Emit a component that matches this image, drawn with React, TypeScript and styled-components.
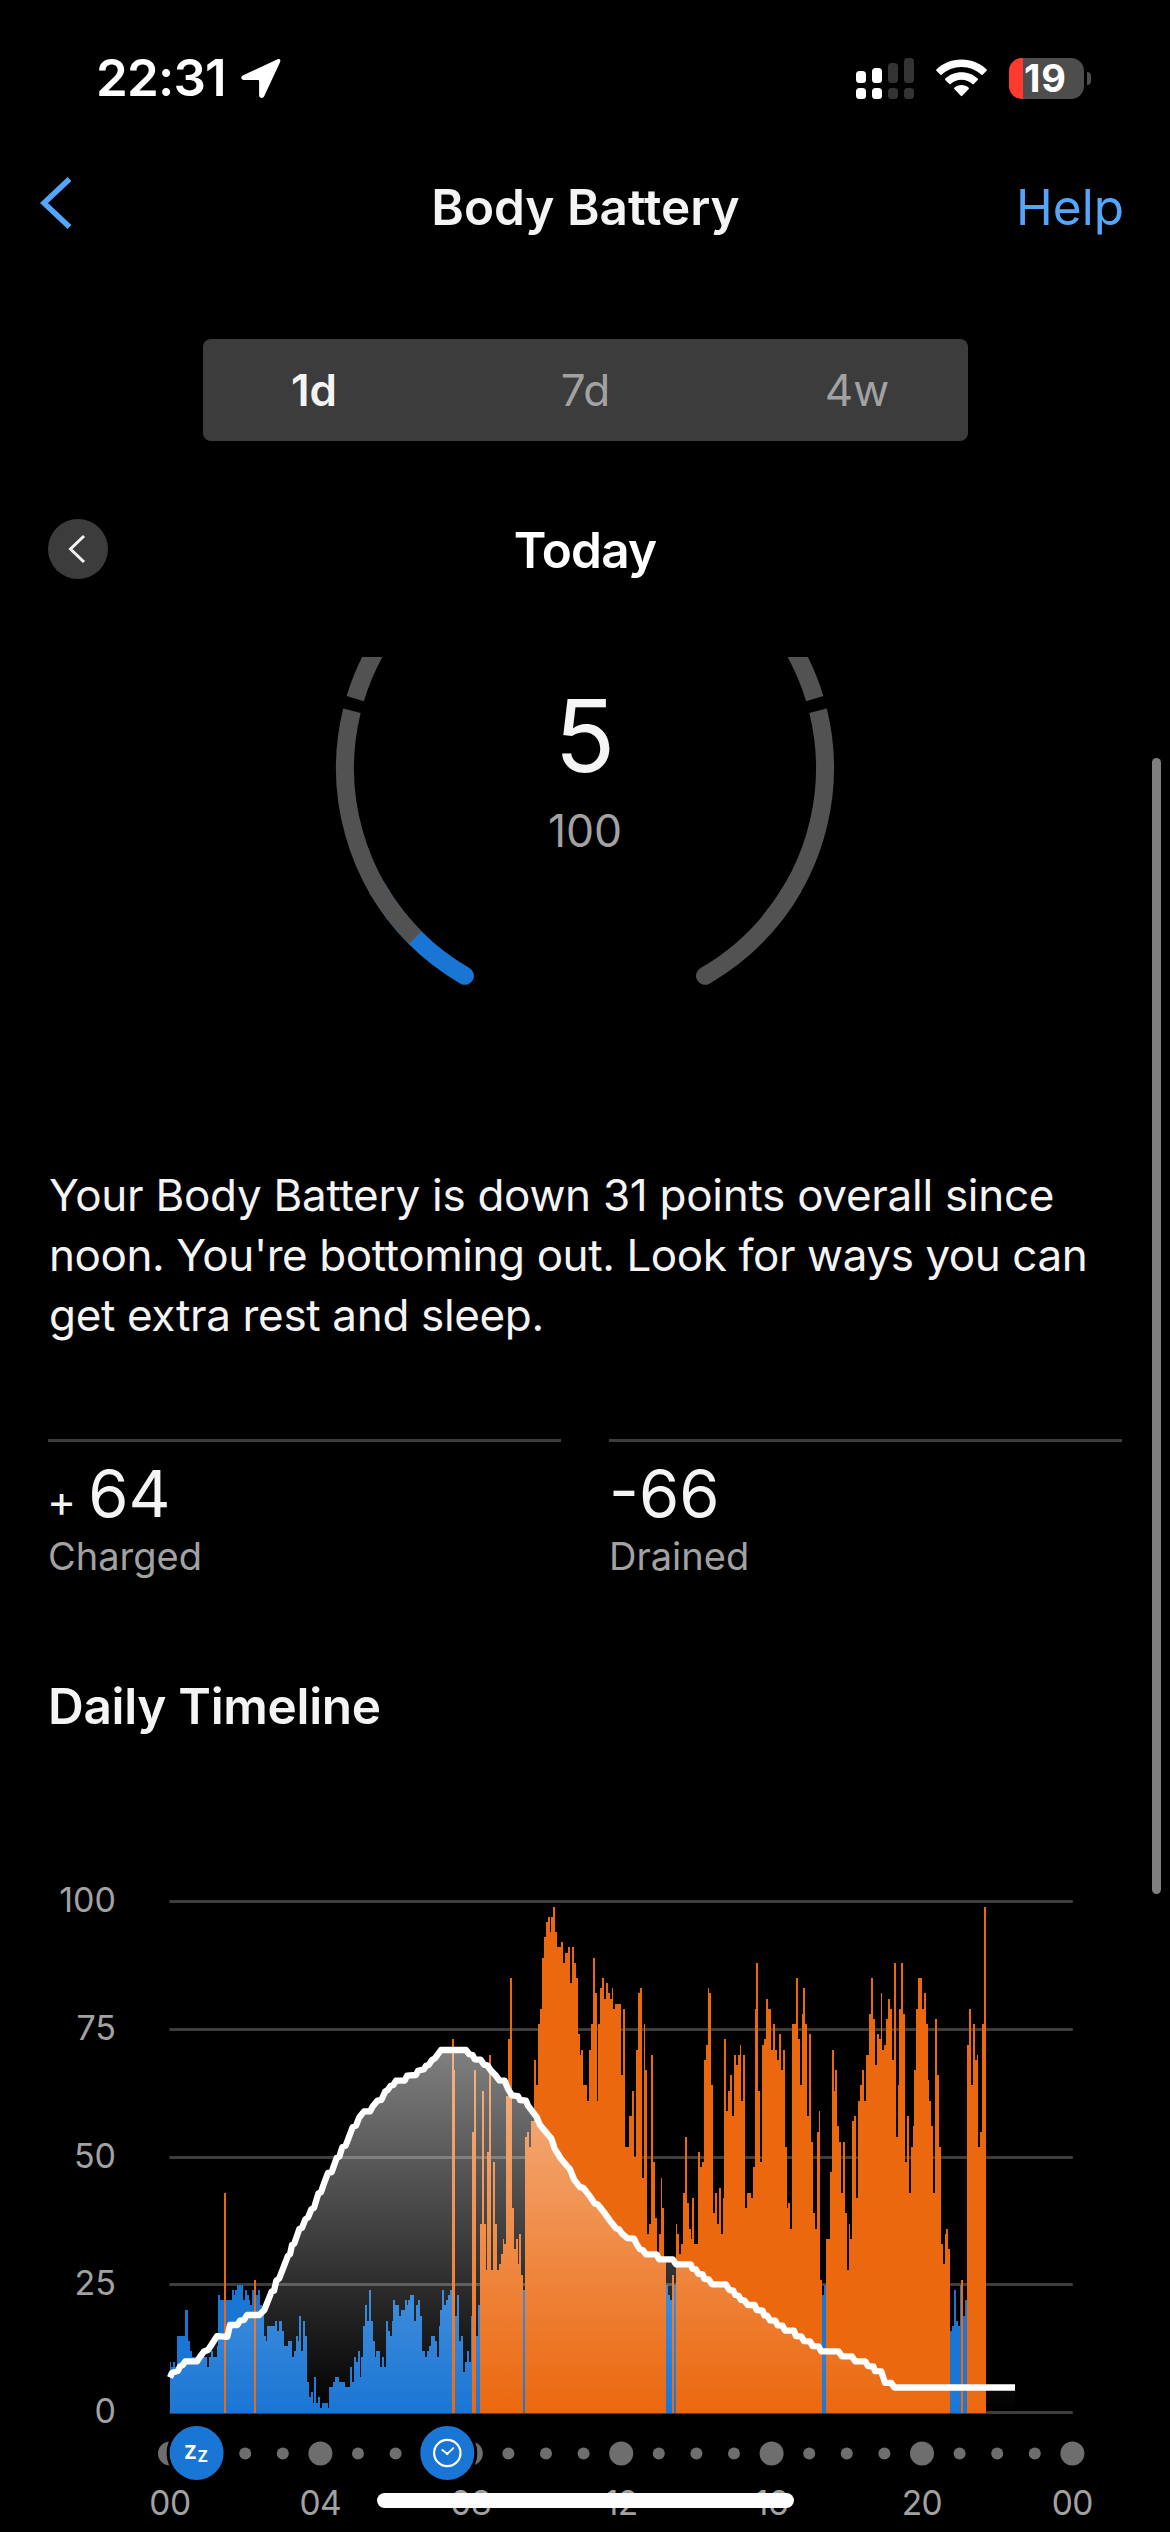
import React from 'react';
import styled, { createGlobalStyle } from 'styled-components';

const color = {
  bg: '#000000',
  text: '#f4f4f4',
  muted: '#a2a2a2',
  panel: '#3c3c3c',
  grid: '#3d3d3d',
  gauge: '#525252',
  dot: '#6e6e6e',
  link: '#54a6fd',
  blue: '#1a76d4',
  orange: '#eb680e',
};

const GlobalStyle = createGlobalStyle`
  html, body { margin: 0; background: ${color.bg}; }
  * { box-sizing: border-box; }
`;

const Screen = styled.main`
  position: relative;
  display: flex;
  flex-direction: column;
  width: 1170px;
  height: 2532px;
  overflow: hidden;
  background: ${color.bg};
  color: ${color.text};
  font-family: Inter, 'Liberation Sans', sans-serif;
`;

const StatusBar = styled.header`
  display: flex;
  flex: none;
  align-items: center;
  justify-content: space-between;
  height: 156px;
  padding: 0 79px 0 96px;
  color: #fff;
`;

const StatusGroup = styled.div<{ $gap: number }>`
  display: flex;
  align-items: center;
  gap: ${(p) => p.$gap}px;
`;

const Clock = styled.span`
  font-size: 51px;
  font-weight: 600;
  line-height: 60px;
  letter-spacing: -0.8px;
`;

const Battery = styled.div`
  display: flex;
  align-items: center;
  gap: 3px;
`;

const BatteryBody = styled.div`
  width: 75px;
  height: 41px;
  border-radius: 13px;
  background: linear-gradient(90deg, #ff3b30 14px, #4d4d4d 14px);
  color: #fff;
  font-size: 38px;
  font-weight: 700;
  line-height: 41px;
  letter-spacing: 0.8px;
  padding-left: 15px;
`;

const BatteryTip = styled.div`
  width: 4px;
  height: 13px;
  border-radius: 0 4px 4px 0;
  background: #4d4d4d;
`;

const NavBar = styled.nav`
  display: grid;
  grid-template-columns: 1fr auto 1fr;
  flex: none;
  align-items: center;
  height: 102px;
  padding: 0 46px 0 38px;
`;

const BackButton = styled.button`
  display: flex;
  padding: 0 0 8px;
  border: 0;
  background: none;
`;

const NavTitle = styled.h1`
  margin: 0;
  padding-left: 9px;
  font-size: 49.5px;
  font-weight: 600;
  line-height: 60px;
`;

const HelpLink = styled.a`
  justify-self: end;
  color: ${color.link};
  font-size: 49.5px;
  line-height: 60px;
`;

const Segments = styled.div`
  display: flex;
  flex: none;
  align-items: center;
  justify-content: space-between;
  width: 765px;
  height: 102px;
  margin: 81px 0 0 203px;
  padding: 0 61px;
  border-radius: 8px;
  background: ${color.panel};
`;

const Segment = styled.span<{ $active?: boolean }>`
  width: 100px;
  color: ${(p) => (p.$active ? color.text : color.muted)};
  font-size: 44px;
  font-weight: ${(p) => (p.$active ? 600 : 400)};
  line-height: 54px;
  text-align: center;
`;

const DayRow = styled.div`
  display: grid;
  grid-template-columns: 60px 1fr 60px;
  flex: none;
  align-items: center;
  height: 60px;
  margin-top: 78px;
  padding: 0 48px;
`;

const RoundButton = styled.button`
  display: flex;
  align-items: center;
  justify-content: center;
  width: 60px;
  height: 60px;
  padding: 0 3px 0 0;
  border: 0;
  border-radius: 50%;
  background: ${color.panel};
`;

const DayTitle = styled.h2`
  margin: 0;
  padding-top: 2px;
  color: #fff;
  font-size: 49.5px;
  font-weight: 600;
  line-height: 58px;
  letter-spacing: -0.8px;
  text-align: center;
`;

const GaugeArea = styled.section`
  display: grid;
  flex: none;
  justify-items: center;
  height: 343px;
  margin-top: 78px;

  > * { grid-area: 1 / 1; }
`;

const Readout = styled.div`
  display: flex;
  flex-direction: column;
  align-items: center;
  padding-top: 29px;
`;

const Score = styled.span`
  font-size: 100px;
  line-height: 100px;
`;

const ScoreMax = styled.span`
  margin-top: 23px;
  color: ${color.muted};
  font-size: 44.5px;
  line-height: 44px;
`;

const Summary = styled.p`
  flex: none;
  margin: 165px 0 0;
  padding-left: 49px;
  font-size: 44px;
  line-height: 60px;
`;

const SummaryLine = styled.span<{ $tracking: number }>`
  display: block;
  letter-spacing: ${(p) => p.$tracking}px;
  white-space: nowrap;
`;

const Stats = styled.section`
  display: grid;
  grid-template-columns: 1fr 1fr;
  flex: none;
  gap: 48px;
  margin-top: 94px;
  padding: 0 48px;
`;

const Stat = styled.div`
  display: flex;
  flex-direction: column;
  padding-top: 17px;
  border-top: 3px solid ${color.grid};
`;

const StatValue = styled.div`
  display: flex;
  align-items: baseline;
  gap: 12px;
  height: 70px;
  font-size: 65px;
  line-height: 70px;
`;

const StatSign = styled.span`
  margin-left: -1px;
  font-size: 44px;
  line-height: 44px;
`;

const StatLabel = styled.span`
  margin-top: 3px;
  color: ${color.muted};
  font-size: 38px;
  line-height: 48px;
`;

const SectionTitle = styled.h2`
  flex: none;
  margin: 96px 0 0 48px;
  font-size: 49.5px;
  font-weight: 600;
  line-height: 60px;
  letter-spacing: -0.3px;
`;

const ChartRow = styled.section`
  display: grid;
  grid-template-columns: 116px 960px;
  flex: none;
  column-gap: 24px;
  height: 590px;
  margin-top: 100px;
`;

const LevelAxis = styled.div`
  display: flex;
  flex-direction: column;
  align-items: flex-end;
  color: ${color.muted};
  font-size: 34px;
`;

const LevelLabel = styled.span`
  flex: none;
  height: 127.8px;
  line-height: 127.8px;
`;

const EventTrack = styled.div`
  flex: none;
  height: 54px;
  margin-left: 140px;
`;

const HourAxis = styled.div`
  display: flex;
  flex: none;
  margin: 3px 0 0 94.8px;
  color: ${color.muted};
  font-size: 33.5px;
  line-height: 40px;
  letter-spacing: -0.5px;
`;

const HourLabel = styled.span`
  flex: none;
  width: 150.4px;
  text-align: center;
`;

const HomeIndicator = styled.div`
  position: absolute;
  bottom: 24px;
  left: 377px;
  width: 417px;
  height: 15px;
  border-radius: 8px;
  background: #fdfdfd;
`;

const ScrollThumb = styled.div`
  position: absolute;
  top: 758px;
  right: 9px;
  width: 9px;
  height: 1136px;
  border-radius: 5px;
  background: #7f7f7f;
`;

const Drawing = styled.svg`
  display: block;
  flex: none;
`;

/* ---- Stress series: "x,y" marks where a new level starts; b = rest, o = stress ---- */

const SEGMENTS: { offset: number; marks: string }[] = [
  {
    offset: 0,
    marks: `b60,1350 63,1364 69,1350 75,1364 81,1277 105,1204 114,1291 120,1319 126,1335 171,1364 177,1335 183,1319 189,1335
      201,1305 204,1162 210,1176 o222,876 b228,1176 246,1148 252,1162 255,1148 261,1134 279,1176 285,1148 291,1162 297,1176
      300,1190 306,1148 o312,1120 b318,1162 324,1148 330,1190 336,1204 342,1277 348,1291 351,1249 375,1235 381,1262 387,1235
      396,1262 402,1305 414,1291 426,1335 432,1319 438,1277 444,1291 447,1221 453,1319 459,1235 465,1277 471,1406 477,1448
      483,1434 489,1463 492,1392 498,1463 504,1448 510,1477 516,1463 534,1477 537,1420 549,1406 555,1392 567,1406 585,1420
      600,1364 606,1406 612,1335 618,1349 624,1319 630,1391 633,1335 639,1249 645,1190 651,1235 657,1148 663,1235 669,1291
      675,1335 678,1319 690,1364 696,1335 702,1364 708,1235 714,1262 720,1277 726,1235 729,1176 735,1190 747,1221 753,1204
      765,1176 771,1190 774,1176 780,1162 792,1235 798,1190 804,1176 810,1221 816,1319 825,1335 831,1319 837,1305 843,1277
      855,1291 861,1335 867,1249 870,1204 876,1148 882,1190 888,1176 894,1162 900,1148 o906,445 912,532 b915,1221 921,1162
      927,1291 933,1277 939,1378 945,1349 951,1319 957,1349 963,1221 o966,706 972,532 b978,1277 984,1190`,
  },
  {
    offset: 870,
    marks: `o120,963 126,591 132,963 138,1091 141,762 147,490 153,1091 159,790 165,963 171,1091 177,1075 183,1047 189,1005
      192,1019 198,605 204,445 210,274 216,918 222,1033 228,1005 234,1075 237,991 243,1106 b249,1148 o255,720 261,706
      267,748 273,675 282,504 288,574 294,404 300,361 306,218 312,160 318,118 324,104 330,146 333,104 339,76 345,146
      351,188 363,174 369,232 375,204 384,188 390,288 396,188 402,232 408,274 414,431 420,490 423,476 429,574 441,619
      447,476 453,404 459,218 465,316 471,619 474,404 480,302 486,274 492,333 498,288 504,316 510,333 516,302 519,361
      525,347 543,546 549,361 555,748 567,661 576,591 582,776 588,476 594,316 600,302 606,834 612,404 615,532 621,991
      627,963 633,490 639,790 645,946 651,1047 657,991 663,834 666,918 672,1062 b678,1134 684,1162 690,1176 o696,1106
      b702,1134`,
  },
  {
    offset: 1560,
    marks: `o18,963 21,991 27,1047 33,1019 39,876 45,720 51,904 57,977 63,1005 66,890 72,1019 84,762 90,804 96,790 102,504
      108,462 114,302 117,316 123,574 129,932 135,876 141,963 147,862 153,991 159,890 162,445 168,647 174,591 180,546
      186,661 192,490 198,518 204,490 210,462 213,619 219,490 225,918 231,876 243,890 249,804 255,361 258,232 264,591
      270,790 276,462 282,445 288,333 294,361 303,476 309,404 315,476 321,504 327,431 333,532 339,476 345,748 351,918
      354,904 360,977 366,404 378,274 384,445 390,574 396,375 399,302 405,404 411,661 417,431 423,734 429,932 435,977
      441,706 447,647 450,1120 b456,1162 462,1134 o468,1005 480,818 486,476 492,591 495,532 501,689 507,734 513,876
      519,734 525,932 531,1091 537,963 540,1005`,
  },
  {
    offset: 2100,
    marks: `o6,675 12,661 18,890 24,619 30,574 36,532 42,619 48,490 57,375 63,274 69,389 75,518 81,431 87,445 93,316 96,476
      102,462 108,389 114,333 120,361 126,504 132,232 138,720 144,574 147,361 153,232 159,375 165,790 171,661 177,876
      183,748 189,689 192,532 198,361 204,274 216,361 222,316 228,404 234,560 237,619 243,689 249,876 255,389 261,546
      267,748 273,1019 279,1075 285,991 288,977 294,1033 b300,1263 306,1249 312,1148 318,1235 324,1249 330,1134 o333,1120
      b339,1221 345,1176 o351,462 357,361 363,574 369,404 375,504 381,490 384,748 390,706 396,404 402,76`,
  },
];

const SERIES_END = 2508;
const BASE = 577;

/* Body Battery curve, in the same units as the stress series */
const CURVE = `60,1393 66,1380 84,1374 90,1362 98,1358 106,1348 141,1348 150,1335 162,1320 174,1316 184,1302 201,1277 232,1279
  240,1246 262,1246 270,1234 282,1232 291,1218 328,1218 343,1204 365,1152 372,1150 379,1122 388,1115 414,1052 420,1048
  426,1022 433,1018 448,977 456,974 466,950 474,945 484,922 492,918 505,878 513,874 522,850 534,820 545,818 560,778
  568,774 577,748 587,744 608,692 618,688 628,664 642,648 660,648 668,634 682,618 694,616 706,592 713,588 722,576
  730,574 738,562 764,562 771,548 798,546 804,534 822,530 828,520 836,518 846,504 854,500 873,476 948,476 958,488
  968,490 974,502 992,503 1002,517 1012,519 1024,535 1036,546 1048,561 1064,562 1074,585 1086,603 1104,605 1110,616
  1128,618 1134,632 1160,664 1170,686 1204,724 1214,752 1234,782 1260,810 1272,838 1290,860 1300,862 1320,886 1334,906
  1343,908 1360,928 1380,954 1398,975 1407,978 1416,990 1432,1003 1452,1004 1460,1020 1470,1034 1478,1036 1488,1048
  1520,1048 1527,1062 1568,1062 1578,1076 1622,1076 1628,1089 1638,1090 1645,1103 1658,1104 1663,1117 1676,1118
  1686,1132 1728,1132 1738,1148 1750,1150 1756,1162 1766,1164 1773,1176 1784,1178 1793,1190 1814,1190 1820,1204
  1838,1206 1843,1219 1852,1220 1860,1233 1876,1234 1883,1247 1898,1248 1905,1262 1932,1262 1938,1277 1954,1278
  1962,1291 1980,1292 1988,1305 2006,1306 2014,1320 2066,1320 2076,1334 2106,1334 2116,1348 2146,1348 2154,1361
  2170,1362 2175,1375 2194,1376 2205,1408 2224,1408 2233,1421 2595,1421`;

const toX = (u: number) => 10 + u / 3;
const toY = (u: number) => 44 + u / 2.8;

type Mark = { x: number; y: number; kind: 'b' | 'o' };

const marks: Mark[] = (() => {
  let kind: 'b' | 'o' = 'b';
  return SEGMENTS.flatMap(({ offset, marks: text }) =>
    text.trim().split(/\s+/).map((token) => {
      if (token[0] === 'b' || token[0] === 'o') kind = token[0];
      const [x, y] = token.replace(/^[bo]/, '').split(',').map(Number);
      return { x: x + offset, y, kind };
    }),
  );
})();

const barsPath = (kind: 'b' | 'o') =>
  marks
    .map((m, i) => {
      if (m.kind !== kind) return '';
      const end = marks[i + 1]?.x ?? SERIES_END;
      return `M${toX(m.x)} ${BASE}V${Math.round(toY(m.y))}H${toX(end)}V${BASE}Z`;
    })
    .join('');

const curvePoints = CURVE.trim().split(/\s+/).map((p) => {
  const [x, y] = p.split(',').map(Number);
  return `${toX(x).toFixed(2)} ${toY(y).toFixed(2)}`;
});
const curvePath = `M${curvePoints.join('L')}`;
const areaPath = `${curvePath}V${BASE}H${toX(60)}Z`;

const polar = (deg: number) => {
  const a = ((deg + 90) * Math.PI) / 180;
  return `${(250 + 240 * Math.cos(a)).toFixed(2)} ${(111 + 240 * Math.sin(a)).toFixed(2)}`;
};
const arc = (from: number, to: number) =>
  `M${polar(from)}A240 240 0 ${to - from > 180 ? 1 : 0} 1 ${polar(to)}`;

const LocationIcon = () => (
  <Drawing width="42" height="42" viewBox="0 0 42 42">
    <path
      d="M37.6 2.2 3.2 18.3C.2 19.8.9 23 4 23h14.2c.6 0 .9.3.9.9V38c0 3.3 3.7 4 5.2.9L40 5.2C41.1 2.7 39.7 1.2 37.6 2.2Z"
      fill="#fff"
    />
  </Drawing>
);

const SignalIcon = () => (
  <Drawing width="58" height="41" viewBox="0 0 58 41">
    {[13, 10, 5, 0].map((top, i) => (
      <g key={i} fill={i < 2 ? '#fff' : '#333'}>
        <rect x={i * 16} y={top} width="10" height={25 - top} rx="3.5" />
        <rect x={i * 16} y="30" width="10" height="11" rx="3.5" />
      </g>
    ))}
  </Drawing>
);

const WifiIcon = () => (
  <Drawing width="51" height="38" viewBox="0 0 51 38">
    <path d="M25.5 .5C15.5 .5 6.5 4.500 .4 10.400a.9.9 0 0 0 0 1.300l4 4a.9.9 0 0 0 1.300 0C10.800 10.900 17.800 8 25.500 8s14.700 2.900 19.800 7.700a.9.9 0 0 0 1.300 0l4-4a.9.9 0 0 0 0-1.300C44.500 4.500 35.500 .5 25.500 .5Z" fill="#fff" />
    <path d="M25.5 13.300c-6.300 0-12 2.400-16.200 6.300a.9.9 0 0 0 0 1.400l4 4a.9.9 0 0 0 1.300 0c2.800-2.600 6.700-4.300 10.900-4.300s8.100 1.700 10.900 4.300a.9.9 0 0 0 1.300 0l4-4a.9.9 0 0 0 0-1.400c-4.200-3.900-9.900-6.300-16.200-6.300Z" fill="#fff" />
    <path d="M25.5 26c-2.800 0-5.300 1-7.200 2.700a.9.9 0 0 0 0 1.300l6.500 6.700a.9.9 0 0 0 1.400 0l6.500-6.700a.9.9 0 0 0 0-1.300C30.800 27 28.300 26 25.500 26Z" fill="#fff" />
  </Drawing>
);

const Gauge = () => (
  <Drawing width="500" height="343" viewBox="0 0 500 343" fill="none" strokeWidth="18">
    <path d={arc(30, 60)} stroke={color.blue} strokeLinecap="round" />
    <path d={arc(300, 330)} stroke={color.gauge} strokeLinecap="round" />
    <path d={arc(45, 103.8)} stroke={color.gauge} />
    <path d={arc(106.8, 253.2)} stroke={color.gauge} />
    <path d={arc(256.2, 310)} stroke={color.gauge} />
  </Drawing>
);

const TimelinePlot = () => (
  <Drawing width="960" height="590" viewBox="0 0 960 590">
    <defs>
      <linearGradient id="energy" gradientUnits="userSpaceOnUse" x1="0" y1="214" x2="0" y2="577">
        <stop offset="0" stopColor="#fff" stopOpacity="0.5" />
        <stop offset="1" stopColor="#fff" stopOpacity="0" />
      </linearGradient>
    </defs>
    <g fill={color.grid}>
      {[64, 192, 320, 447, 575].map((y) => (
        <rect key={y} x="29.5" y={y} width="903.3" height="3" />
      ))}
    </g>
    <g shapeRendering="crispEdges">
      <path d={barsPath('b')} fill={color.blue} />
      <path d={barsPath('o')} fill={color.orange} />
    </g>
    <path d={areaPath} fill="url(#energy)" />
    <path d={curvePath} fill="none" stroke="#fff" strokeWidth="6.3" strokeLinejoin="round" />
  </Drawing>
);

const EventTrackDrawing = () => (
  <Drawing width="960" height="62" viewBox="0 0 960 62">
    <g fill={color.dot}>
      {Array.from({ length: 25 }, (_, h) => (
        <circle key={h} cx={30 + h * 37.6} cy="27.5" r={h % 4 === 0 ? 12 : 6} />
      ))}
    </g>
    <g fill={color.blue} stroke="#000" strokeWidth="3">
      <circle cx="56.6" cy="27" r="28.5" />
      <circle cx="307.3" cy="27" r="28.5" />
    </g>
    <g fill="#fff" fontFamily="'Open Sans', sans-serif" fontWeight="700">
      <text x="44.8" y="32.5" fontSize="19.5">Z</text>
      <text x="58" y="36.3" fontSize="16.5">Z</text>
    </g>
    <g fill="none" stroke="#fff" strokeWidth="2.2" strokeLinecap="round">
      <circle cx="307.3" cy="27" r="13.2" />
      <path d="M302.3 24l5 3.8 6-5.6" strokeWidth="1.8" />
      <circle cx="307.3" cy="27.6" r="1" fill="#fff" strokeWidth="1" />
    </g>
  </Drawing>
);

export default function App() {
  return (
    <Screen>
      <GlobalStyle />
      <StatusBar>
        <StatusGroup $gap={14}>
          <Clock>22:31</Clock>
          <LocationIcon />
        </StatusGroup>
        <StatusGroup $gap={22}>
          <SignalIcon />
          <WifiIcon />
          <Battery>
            <BatteryBody>19</BatteryBody>
            <BatteryTip />
          </Battery>
        </StatusGroup>
      </StatusBar>

      <NavBar>
        <BackButton aria-label="Back">
          <Drawing width="36" height="54" viewBox="0 0 36 54">
            <path d="M31.5 3 6 27l25.5 24" fill="none" stroke={color.link} strokeWidth="5.5" />
          </Drawing>
        </BackButton>
        <NavTitle>Body Battery</NavTitle>
        <HelpLink>Help</HelpLink>
      </NavBar>

      <Segments>
        <Segment $active>1d</Segment>
        <Segment>7d</Segment>
        <Segment>4w</Segment>
      </Segments>

      <DayRow>
        <RoundButton aria-label="Previous day">
          <Drawing width="20" height="30" viewBox="0 0 20 30">
            <path d="M17 2 3.5 15 17 28" fill="none" stroke={color.text} strokeWidth="3" />
          </Drawing>
        </RoundButton>
        <DayTitle>Today</DayTitle>
      </DayRow>

      <GaugeArea>
        <Gauge />
        <Readout>
          <Score>5</Score>
          <ScoreMax>100</ScoreMax>
        </Readout>
      </GaugeArea>

      <Summary>
        <SummaryLine $tracking={-0.28}>Your Body Battery is down 31 points overall since</SummaryLine>
        <SummaryLine $tracking={-0.42}>noon. You're bottoming out. Look for ways you can</SummaryLine>
        <SummaryLine $tracking={-0.34}>get extra rest and sleep.</SummaryLine>
      </Summary>

      <Stats>
        <Stat>
          <StatValue>
            <StatSign>+</StatSign>64
          </StatValue>
          <StatLabel>Charged</StatLabel>
        </Stat>
        <Stat>
          <StatValue>-66</StatValue>
          <StatLabel>Drained</StatLabel>
        </Stat>
      </Stats>

      <SectionTitle>Daily Timeline</SectionTitle>

      <ChartRow>
        <LevelAxis>
          {[100, 75, 50, 25, 0].map((level) => (
            <LevelLabel key={level}>{level}</LevelLabel>
          ))}
        </LevelAxis>
        <TimelinePlot />
      </ChartRow>
      <EventTrack>
        <EventTrackDrawing />
      </EventTrack>
      <HourAxis>
        {['00', '04', '08', '12', '16', '20', '00'].map((hour, i) => (
          <HourLabel key={i}>{hour}</HourLabel>
        ))}
      </HourAxis>

      <ScrollThumb />
      <HomeIndicator />
    </Screen>
  );
}
